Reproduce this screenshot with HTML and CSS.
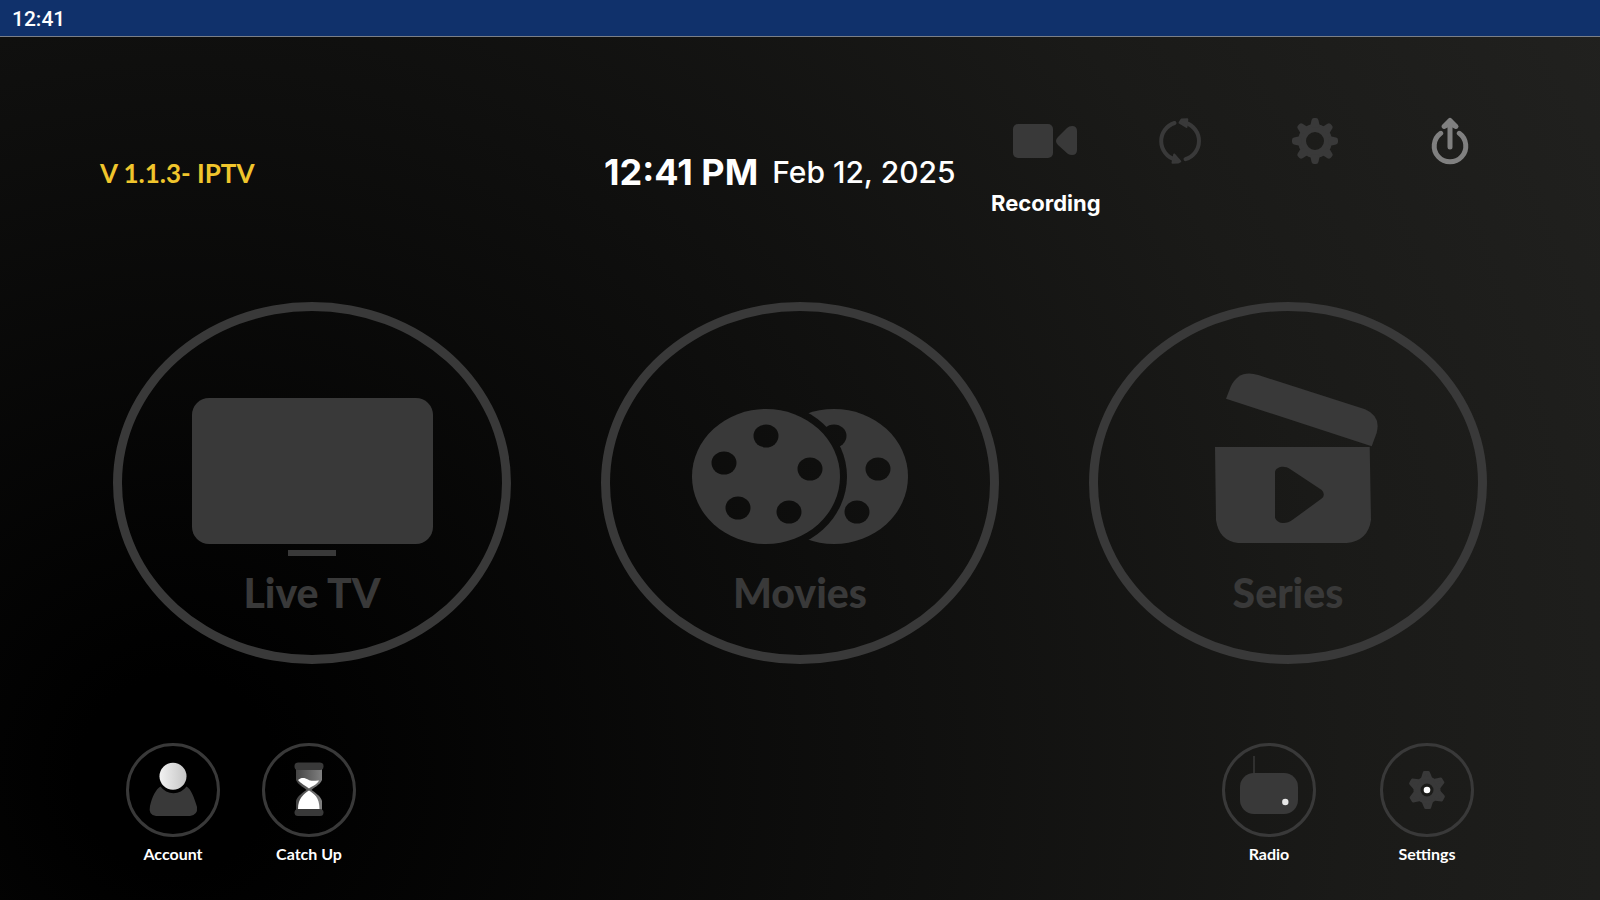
FILE: index.html
```html
<!DOCTYPE html>
<html lang="en">
<head>
  <meta charset="UTF-8">
  <title>IPTV Home</title>
  <meta name="viewport" content="width=device-width, initial-scale=1.0">
  <link rel="stylesheet" href="styles.css">
</head>
<body>
  <div class="status-bar">12:41</div>

  <header class="top-bar">
    <div class="version">V 1.1.3- IPTV</div>

    <div class="clock">
      <span class="clock-time">12:41 PM</span>
      <span class="clock-date">Feb 12, 2025</span>
    </div>

    <nav class="top-menu">
      <button class="top-button">
        <svg viewBox="0 0 66 54" fill="currentColor">
          <rect x="0" y="10" width="40" height="34" rx="5"/>
          <path d="M54 14 L45 23 Q41 27 45 31 L55 40 Q57 41 59 41 Q64 41 64 36 V17 Q64 12 59 12 Q56 12 54 14Z"/>
        </svg>
        <span class="top-label">Recording</span>
      </button>
      <button class="top-button" aria-label="Refresh">
        <svg viewBox="0 0 66 54" fill="none" stroke="currentColor" stroke-width="4" stroke-linecap="round">
          <path d="M27.5 9 A19 19 0 0 0 28 45.4"/>
          <path d="M38.5 45.2 A19 19 0 0 0 39 9"/>
          <path d="M32.5 8.7 L34.5 5.5 L40.3 5.3 L39.5 13 Z" fill="currentColor" stroke-width="2" stroke-linejoin="round"/>
          <path d="M33.3 47.3 L31 48.5 L25.5 48.7 L27.2 40.5 Z" fill="currentColor" stroke-width="2" stroke-linejoin="round"/>
        </svg>
      </button>
      <button class="top-button" aria-label="Options">
        <svg viewBox="0 0 66 54" fill="none" stroke="currentColor">
          <circle cx="33" cy="27" r="13" stroke-width="8"/>
          <g stroke-width="5" stroke-linejoin="round">
            <path id="cog" d="M31 11 L32 6.5 H34 L35 11 Z M31 43 L32 47.5 H34 L35 43 Z"/>
            <use href="#cog" transform="rotate(45 33 27)"/>
            <use href="#cog" transform="rotate(90 33 27)"/>
            <use href="#cog" transform="rotate(135 33 27)"/>
          </g>
        </svg>
      </button>
      <button class="top-button exit" aria-label="Exit">
        <svg viewBox="0 0 66 54" fill="none" stroke="currentColor" stroke-width="5" stroke-linecap="round" stroke-linejoin="round">
          <path d="M23.7 19.3 A15.8 15.8 0 1 0 42.3 19.3"/>
          <path d="M33 33 V7"/>
          <path d="M27 12.5 L33 6.5 L39 12.5 L33 9.5 Z"/>
        </svg>
      </button>
    </nav>
  </header>

  <main class="tiles">
    <button class="tile">
      <svg viewBox="0 0 260 200" fill="currentColor">
        <rect x="10" y="32" width="241" height="146" rx="17"/>
        <rect x="106" y="184" width="48" height="6"/>
      </svg>
      <span class="tile-label">Live TV</span>
    </button>
    <button class="tile">
      <svg viewBox="0 0 260 200" fill="currentColor">
        <mask id="reels">
          <ellipse cx="164" cy="110.5" rx="74" ry="67.5" fill="#fff"/>
          <ellipse cx="164" cy="70" rx="12.5" ry="11.5" fill="#000"/>
          <ellipse cx="208" cy="103" rx="12.5" ry="11.5" fill="#000"/>
          <ellipse cx="187" cy="146" rx="12.5" ry="11.5" fill="#000"/>
          <ellipse cx="96" cy="110.5" rx="81" ry="74.5" fill="#000"/>
          <ellipse cx="96" cy="110.5" rx="74" ry="67.5" fill="#fff"/>
          <ellipse cx="96" cy="70" rx="12.5" ry="11.5" fill="#000"/>
          <ellipse cx="54" cy="97" rx="12.5" ry="11.5" fill="#000"/>
          <ellipse cx="140" cy="103" rx="12.5" ry="11.5" fill="#000"/>
          <ellipse cx="68" cy="142" rx="12.5" ry="11.5" fill="#000"/>
          <ellipse cx="119" cy="146" rx="12.5" ry="11.5" fill="#000"/>
        </mask>
        <rect width="260" height="200" mask="url(#reels)"/>
      </svg>
      <span class="tile-label">Movies</span>
    </button>
    <button class="tile">
      <svg viewBox="0 0 260 200" fill="currentColor">
        <path d="M68 32.7 L72.7 20.7 Q81 3 100.3 9 L207 43.3 Q223 50 218.7 66.7 L213.7 80.3 Z"/>
        <path fill-rule="evenodd" d="M57 81 H211.7 L213 154 Q210 175 188.7 177 H80.3 Q61 175 58 154 Z M117 106 V151.5 C118.5 157.5 128 159 134.3 154 L163.7 132.5 Q168 128.5 163.7 124 L132 103 C126 99 118 101 117 106 Z"/>
      </svg>
      <span class="tile-label">Series</span>
    </button>
  </main>

  <footer class="bottom-bar">
    <div class="group">
      <button class="round">
        <svg viewBox="0 0 94 94">
          <defs>
            <linearGradient id="head">
              <stop offset="0" stop-color="#f2f2f2"/>
              <stop offset="1" stop-color="#c4c4c4"/>
            </linearGradient>
          </defs>
          <circle class="ring" cx="47" cy="47" r="45.5"/>
          <circle cx="47" cy="33.3" r="13.5" fill="url(#head)"/>
          <path fill="currentColor" d="M34.5 43.5 A16 16 0 0 0 60.5 43.5 C65 46 68 54 71 64 Q72 72 64 73 H30 Q22 72 24 63 C26 54 30 46 34.5 43.5 Z"/>
        </svg>
        <span class="round-label">Account</span>
      </button>
      <button class="round">
        <svg viewBox="0 0 94 94">
          <defs>
            <linearGradient id="glass">
              <stop offset="0" stop-color="#444"/>
              <stop offset="1" stop-color="#808080"/>
            </linearGradient>
          </defs>
          <circle class="ring" cx="47" cy="47" r="45.5"/>
          <path fill="url(#glass)" d="M34 26 H60 V37 C58 42 51 45 49.5 47 C52 49 59 53 60 58 V67 H34 V58 C35 53 42 49 44.5 47 C43 45 36 42 34 37 Z"/>
          <path fill="#fff" d="M36 37 C39 34 43 34.5 46 36.5 C50 39 54 37 57 37.5 C55 42 49 43.5 47 45.5 C44 43 38 40 36 37 Z"/>
          <path fill="#fff" d="M47 47.5 C52 51 57.5 54 57.5 66 H36 C36 55 42 51 47 47.5 Z"/>
          <rect x="32.5" y="19.5" width="29" height="7.5" rx="3.5" fill="currentColor"/>
          <rect x="32.5" y="66" width="29" height="7" rx="3.5" fill="currentColor"/>
        </svg>
        <span class="round-label">Catch Up</span>
      </button>
    </div>
    <div class="group group-right">
      <button class="round">
        <svg viewBox="0 0 94 94">
          <circle class="ring" cx="47" cy="47" r="45.5"/>
          <path stroke="currentColor" stroke-width="1.5" d="M32 13 V32"/>
          <rect x="18" y="30" width="58" height="41" rx="14" fill="currentColor"/>
          <circle cx="63.3" cy="59" r="3.2" fill="#e8e8e8"/>
        </svg>
        <span class="round-label">Radio</span>
      </button>
      <button class="round">
        <svg viewBox="0 0 94 94">
          <circle class="ring" cx="47" cy="47" r="45.5"/>
          <g fill="none" stroke="currentColor">
            <circle cx="47" cy="47" r="10" stroke-width="7"/>
            <g stroke-width="3" stroke-linejoin="round" fill="currentColor" transform="rotate(-2 47 47)">
              <path id="tooth" d="M43 35 L45 29.5 H49 L51 35 Z M43 59 L45 64.5 H49 L51 59 Z"/>
              <use href="#tooth" transform="rotate(60 47 47)"/>
              <use href="#tooth" transform="rotate(120 47 47)"/>
            </g>
          </g>
          <circle cx="47" cy="47" r="3.3" fill="#fff"/>
        </svg>
        <span class="round-label">Settings</span>
      </button>
    </div>
  </footer>
</body>
</html>
```

FILE: styles.css
```css
* {
  box-sizing: border-box;
}
body {
  margin: 0;
  min-height: 100vh;
  display: flex;
  flex-direction: column;
  font-family: Lato, "Open Sans", sans-serif;
  color: #fff;
  background: radial-gradient(circle farthest-corner at 11% 86%, #000 6%, #0f0f0e 44%, #1a1a18 72%, #21211f 100%);
}
button {
  padding: 0;
  border: none;
  background: none;
  color: #393939;
  font-family: inherit;
  cursor: pointer;
}
.status-bar {
  height: 37px;
  padding-left: 12px;
  border-bottom: 1px solid #7a7f88;
  background-color: #10316b;
  font: 500 21px/38px Roboto, sans-serif;
}

/* header */
.top-bar {
  display: flex;
  align-items: center;
  padding: 77px 83px 6px 100px;
}
.version {
  flex: 1;
  padding-top: 14px;
  color: #f0c52c;
  font-size: 26px;
  font-weight: 700;
  line-height: 36px;
}
.clock {
  display: flex;
  align-items: center;
  gap: 14px;
  padding-top: 12px;
  font-family: Inter, sans-serif;
  line-height: 44px;
  white-space: nowrap;
}
.clock-time {
  font-size: 36px;
  font-weight: 700;
}
.clock-date {
  font-size: 30px;
  font-weight: 500;
}
.top-menu {
  display: grid;
  grid-template-columns: repeat(4, 1fr);
  width: 38%;
  margin-left: 23px;
}
.top-button {
  display: flex;
  flex-direction: column;
  align-items: center;
  gap: 21px;
}
.top-button svg {
  width: 66px;
  height: 54px;
}
.top-label {
  color: #fff;
  font: 700 22px/28px Inter, sans-serif;
}
.exit {
  color: #808080;
}

/* big tiles */
.tiles {
  flex: 1;
  display: grid;
  grid-template-columns: repeat(3, 1fr);
  align-items: center;
  justify-items: center;
  padding: 0 68px;
}
.tile {
  display: flex;
  flex-direction: column;
  align-items: center;
  width: 82%;
  max-width: 398px;
  aspect-ratio: 11 / 10;
  padding-top: 55px;
  border: 9px solid #393939;
  border-radius: 50%;
}
.tile svg {
  width: 260px;
  max-width: 70%;
}
.tile-label {
  font-size: 41px;
  font-weight: 900;
  line-height: 54px;
}

/* footer */
.bottom-bar {
  display: flex;
  justify-content: space-between;
  padding: 0 126px 34px;
}
.group {
  display: flex;
  gap: 42px;
}
.group-right {
  gap: 64px;
}
.round {
  display: flex;
  flex-direction: column;
  align-items: center;
  gap: 5px;
  width: 94px;
}
.round svg {
  width: 94px;
  height: 94px;
}
.ring {
  fill: none;
  stroke: #393939;
  stroke-width: 3px;
}
.round-label {
  color: #fff;
  font-size: 16px;
  font-weight: 700;
  line-height: 24px;
}
```
